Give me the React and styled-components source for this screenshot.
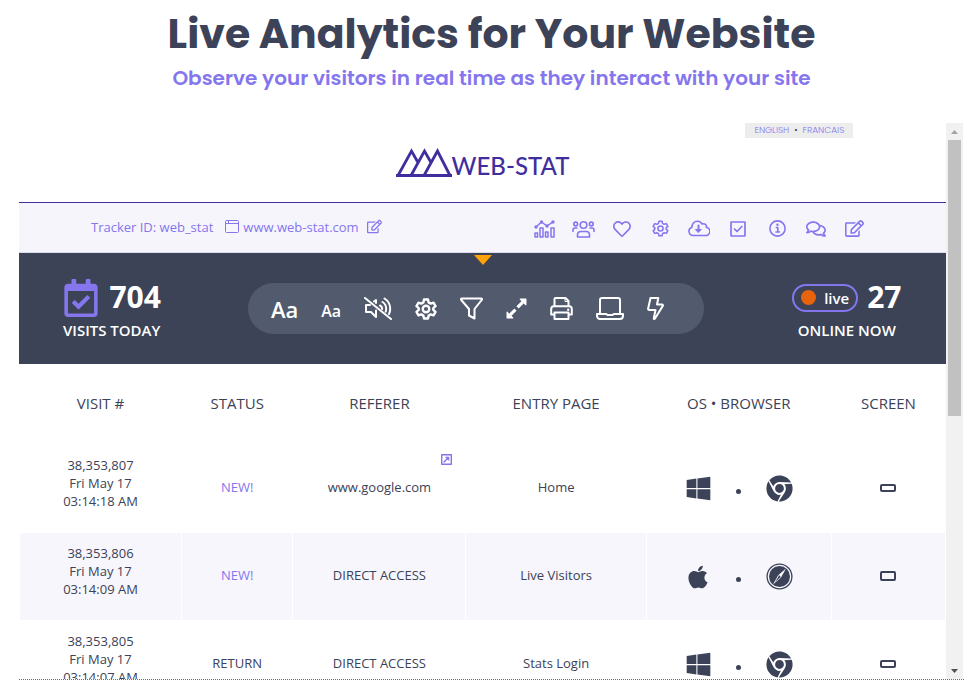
import React from "react";
import styled, { createGlobalStyle } from "styled-components";
import {
    FaApple,
    FaChrome,
    FaRegCalendarCheck,
    FaRegComments,
    FaRegEdit,
    FaRegHeart,
    FaWindows
} from "react-icons/fa";

const INK = "#3c4257";
const VIOLET = "#8576ee";
const LOGO_COLOR = "#402e9e";
const BAR_BG = "#f6f5fc";
const ROW_BG = "#f6f6fc";
const PANEL_BG = "#3c4356";
const PILL_BG = "#525a6e";
const HEADING_FONT = "Poppins, Inter, sans-serif";
const BODY_FONT = "\"Open Sans\", \"Noto Sans\", sans-serif";

const GlobalStyle = createGlobalStyle`
  * {
    box-sizing: border-box;
  }

  body {
    margin: 0;
    background: #fff;
    color: ${INK};
    font-family: ${BODY_FONT};
  }

  a {
    color: ${VIOLET};
    text-decoration: none;
  }

  svg {
    display: block;
  }
`;

const Page = styled.main`
  height: 100vh;
  display: flex;
  flex-direction: column;
  padding: 8px 7px 9px 19px;
`;

const Heading = styled.header`
  height: 115px;
  flex-shrink: 0;
  text-align: center;
  font-family: ${HEADING_FONT};
`;

const Title = styled.h1`
  margin: 0;
  font-size: 41px;
  line-height: 52px;
  font-weight: 700;
  white-space: nowrap;
`;

const Subtitle = styled.h2`
  margin: 4px 0 0;
  font-size: 20px;
  line-height: 28px;
  font-weight: 600;
  color: ${VIOLET};
`;

const Frame = styled.section`
  flex: 1;
  min-height: 0;
  display: flex;
  border-bottom: 1px dotted #6a5cc4;
`;

const FrameContent = styled.div`
  flex: 1;
  min-width: 0;
  overflow: hidden;
`;

const ScrollTrack = styled.div`
  width: 17px;
  margin-right: 1px;
  padding: 0 2px;
  background: #f1f1f1;
  display: flex;
  flex-direction: column;
`;

const ScrollThumb = styled.div`
  height: 49.7%;
  background: #c1c1c1;
`;

const ScrollArrow = styled.div`
  height: 17px;
  display: flex;
  align-items: center;
  justify-content: center;
  margin-top: ${props => props.$atEnd ? "auto" : 0};
`;

const Scrollbar = () => {
    return <ScrollTrack>
        <ScrollArrow>
            <svg width="7" height="4" fill="#a3a3a3"><path d="M3.500 0L7 4H0z"/></svg>
        </ScrollArrow>
        <ScrollThumb/>
        <ScrollArrow $atEnd>
            <svg width="7" height="4" fill="#505050"><path d="M0 0h7L3.500 4z"/></svg>
        </ScrollArrow>
    </ScrollTrack>;
};

const Languages = styled.nav`
  width: fit-content;
  margin-left: auto;
  margin-right: 10%;
  padding: 0 9px;
  background: #ededed;
  font-family: ${HEADING_FONT};
  font-size: 9px;
  line-height: 15px;
  font-weight: 300;
  display: flex;
  gap: 5px;
`;

const Logo = styled.div`
  height: 64px;
  padding-top: 10px;
  display: flex;
  justify-content: center;
`;

const LogoText = styled.span`
  color: ${LOGO_COLOR};
  font-family: Lato, sans-serif;
  font-size: 24px;
  line-height: 36px;
  font-weight: 500;
`;

const TrackerBar = styled.div`
  height: 51px;
  padding: 0 72px;
  border-top: 1px solid ${LOGO_COLOR};
  border-bottom: 1px solid #dcdaf0;
  background: ${BAR_BG};
  color: ${VIOLET};
  display: flex;
  align-items: center;
  justify-content: space-between;
`;

const Tracker = styled.div`
  margin-bottom: 2px;
  display: flex;
  align-items: center;
  gap: 4px;
  font-size: 13px;
  line-height: 18px;
`;

const TrackerId = styled.span`
  margin-right: 8px;
`;

const TrackerSite = styled.a`
  margin-right: 4px;
`;

const NavIcons = styled.nav`
  width: 349px;
  margin-top: 2px;
  display: grid;
  grid-template-columns: repeat(9, 1fr);
  align-items: center;
  justify-items: center;
`;

const IconButton = styled.button`
  padding: 0;
  border: none;
  background: none;
  color: inherit;
  font: inherit;
  cursor: pointer;
`;

const Panel = styled.div`
  position: relative;
  height: 111px;
  padding-top: 23px;
  background: ${PANEL_BG};
  color: #fff;
  display: flex;
  justify-content: space-between;
  align-items: flex-start;
`;

const PanelArrow = styled.svg`
  position: absolute;
  top: 2px;
  left: 50%;
  margin-left: -9px;
`;

const Stat = styled.div`
  width: ${props => props.width};
  display: flex;
  flex-direction: column;
  align-items: center;
`;

const StatTop = styled.div`
  height: 43px;
  display: flex;
  align-items: center;
  gap: 9px;
  font-size: 30px;
  line-height: 40px;
  font-weight: 700;
`;

const StatNumber = styled.span`
  padding-bottom: 2px;
`;

const StatLabel = styled.div`
  font-size: 15px;
  line-height: 22px;
  font-weight: 600;
`;

const LiveBadge = styled.span`
  height: 28px;
  padding: 0 7px;
  border: 2px solid ${VIOLET};
  border-radius: 14px;
  display: flex;
  align-items: center;
  gap: 8px;
  font-size: 15px;
  font-weight: 600;
`;

const LiveDot = styled.span`
  width: 15px;
  height: 15px;
  border-radius: 50%;
  background: #e8640c;
`;

const Pill = styled.div`
  height: 51px;
  margin-top: 7px;
  padding: 0 40px 0 23px;
  border-radius: 26px;
  background: ${PILL_BG};
  display: flex;
  align-items: center;
  gap: 23px;
`;

const TextSizeButton = styled(IconButton)`
  height: 36px;
  font-size: ${props => props.size}px;
  line-height: ${props => props.$lineHeight}px;
  font-weight: 600;
`;

const Visits = styled.table`
  width: 100%;
  table-layout: fixed;
  border-collapse: separate;
  border-spacing: 1px;
  font-size: 13px;
  line-height: 18px;
  text-align: center;
`;

const HeadCell = styled.th`
  width: ${props => props.width};
  height: 79px;
  padding: 0 0 3px;
  font-size: 15px;
  font-weight: 500;
`;

const VisitCell = styled.td`
  position: relative;
  height: 87px;
  padding: 0 0 ${props => props.$raised ? 12 : 4}px;
  background: ${props => props.$shaded ? ROW_BG : "#fff"};
  color: ${props => props.$accent ? VIOLET : INK};
  font-weight: 500;
`;

const ExternalLink = styled.a`
  position: absolute;
  top: 9px;
  right: 13px;
`;

const Systems = styled.div`
  margin-top: 4px;
  display: flex;
  align-items: center;
  justify-content: center;
  gap: 24px;
`;

const SystemSlot = styled.span`
  width: 28px;
  display: flex;
  justify-content: center;
`;

const Dot = styled.span`
  width: 5px;
  height: 5px;
  margin-top: 5px;
  border-radius: 50%;
  background: ${INK};
`;

const ScreenShape = styled.span`
  display: inline-block;
  width: 16px;
  height: ${props => props.$tall ? 10 : 8}px;
  border: 2px solid ${INK};
  border-radius: 2px;
  vertical-align: middle;
`;

const LineIcon = ({ width, height, box, stroke = 2, children }) => {
    return <svg width={width} height={height} viewBox={box ?? `0 0 ${width} ${height}`} fill="none"
        stroke="currentColor" strokeWidth={stroke} strokeLinejoin="round" strokeLinecap="round">
        {children}
    </svg>;
};

const ChartIcon = () => <LineIcon width={21} height={18} stroke={1.5}>
    <path d="M2 7L7.500 2L13 6L19 1.800"/>
    <g fill="currentColor" stroke="none">
        <circle cx="2" cy="7" r="1.700"/>
        <circle cx="7.500" cy="2" r="1.700"/>
        <circle cx="13" cy="6" r="1.700"/>
        <circle cx="19" cy="2" r="1.700"/>
    </g>
    <path d="M1 13h2.500v4H1zM6 8h3v9H6zM11.500 12h2.500v5h-2.500zM17 8h3v9h-3z"/>
</LineIcon>;

const UsersIcon = () => <LineIcon width={23} height={18} stroke={1.6}>
    <circle cx="11.500" cy="5" r="3.300"/>
    <circle cx="3.700" cy="4" r="1.900"/>
    <circle cx="19.300" cy="4" r="1.900"/>
    <path d="M5.500 17v-2.200c0-2.300 1.700-3.300 3.500-3.300h5c1.800 0 3.500 1 3.500 3.300V17zM1 11.500V10c0-1.200 1-2 2-2h2M22 11.500V10c0-1.200-1-2-2-2h-2"/>
</LineIcon>;

const GearIcon = ({ size, stroke }) => <LineIcon width={size} height={size} box="0 0 22 22" stroke={stroke}>
    <path d="M9 1.500h4l.6 2.900 2.100 1.200 2.800-.9 2 3.500-2.200 1.900v1.800l2.200 1.900-2 3.500-2.800-.9-2.100 1.200-.6 2.900H9l-.6-2.900-2.100-1.200-2.800.9-2-3.500 2.200-1.900v-1.800L1.500 8.200l2-3.500 2.800.9 2.100-1.200z"/>
    <circle cx="11" cy="11" r="3.300"/>
</LineIcon>;

const CloudIcon = () => <LineIcon width={22} height={17} stroke={1.6}>
    <path d="M5.200 15.500a4.200 4.200 0 0 1-1.300-8.200C3.900 3.800 6.200 1.200 9.300 1.200c2.100 0 3.900 1.100 4.900 2.800 2.400-1 4.700.8 4.200 3.400A4.100 4.100 0 0 1 17 15.500z"/>
    <path d="M10.500 5.500v5" strokeWidth="2"/>
    <path d="M7.800 9.500h5.400l-2.700 2.800z" fill="currentColor" strokeWidth="1"/>
</LineIcon>;

const CheckIcon = () => <LineIcon width={16} height={16} stroke={1.7}>
    <rect x="1" y="1" width="14" height="14" rx="0.500"/>
    <path d="M4.500 8l2.500 2.500L11.800 5.500"/>
</LineIcon>;

const InfoIcon = () => <LineIcon width={17} height={17} stroke={1.6}>
    <circle cx="8.500" cy="8.500" r="7.600"/>
    <path d="M7.500 7.500h1.300v4.300M7.200 12h3" strokeLinecap="square"/>
    <circle cx="8.500" cy="4.700" r="1.200" fill="currentColor" stroke="none"/>
</LineIcon>;

const WindowIcon = () => <LineIcon width={14} height={13} stroke={1}>
    <rect x="0.500" y="0.500" width="13" height="12" rx="1"/>
    <path d="M1 3.500h12M3.500 1v2"/>
</LineIcon>;

const MuteIcon = () => <LineIcon width={28} height={23}>
    <path d="M2 8v7h5l5 5V13.500M3 8h3M10 4.500L12 3v3M16 8.500c1.500.8 2.200 2 2.200 3.500M18.500 5c2.400 1.500 3.700 3.900 3.700 6.700 0 1-.2 2-.5 2.900M20.500 1.500c3.700 2.300 5.700 6.100 5.700 10.200 0 2-.4 3.800-1.200 5.300M1 1l26 21"/>
</LineIcon>;

const FilterIcon = () => <LineIcon width={23} height={23}>
    <path d="M2 1.500h19c1 0 1.300.8.700 1.500L14.500 12v9.500L9 18.500V12L1.300 3C.7 2.300 1 1.500 2 1.500z"/>
</LineIcon>;

const ExpandIcon = () => <LineIcon width={21} height={21} box="0 0 20 20">
    <path d="M4 16l5-5M11 9L16 4" strokeWidth="3" strokeLinecap="butt"/>
    <path d="M13.500 1H19v5.500zM1 13.500V19h5.500z" fill="currentColor" strokeWidth="1"/>
</LineIcon>;

const PrinterIcon = () => <LineIcon width={23} height={23}>
    <path d="M4.500 9V2c0-.6.4-1 1-1h10l3 3v5"/>
    <path d="M15 1v3.500h3.500" strokeWidth="1"/>
    <path d="M4 17.500H1.200V12c0-1.700 1-2.800 2.600-2.800h15.400c1.600 0 2.600 1.100 2.600 2.800v5.500H19M4.500 15.500h14V22h-14z"/>
    <circle cx="18.200" cy="12.700" r="1.200" fill="currentColor" stroke="none"/>
</LineIcon>;

const LaptopIcon = () => <LineIcon width={28} height={23}>
    <path d="M4 16V3c0-1.200.8-2 2-2h16c1.200 0 2 .8 2 2v13M1 17h9.500l.7 1h5.600l.7-1H27v1.500c0 2-1.200 3.500-3 3.500H4c-1.800 0-3-1.500-3-3.500z"/>
</LineIcon>;

const BoltIcon = () => <LineIcon width={17} height={23}>
    <path d="M3.500 1h7.800L10 7.500h5c.8 0 1.200.7.800 1.400L8 21.500c-.5.8-1.400.5-1.200-.4L8.500 13H2.200c-.7 0-1.200-.5-1.100-1.200z"/>
</LineIcon>;

const OpenIcon = () => <LineIcon width={11} height={11} stroke={1.4}>
    <rect x="0.700" y="0.700" width="9.600" height="9.600"/>
    <path d="M3 8l4-4"/>
    <path d="M5 3.200h2.800V6z" fill="currentColor" strokeWidth="1"/>
</LineIcon>;

const CompassIcon = () => <svg width="27" height="27" viewBox="0 0 27 27">
    <circle cx="13.500" cy="13.500" r="12.400" fill="none" stroke={INK} strokeWidth="1.300"/>
    <circle cx="13.500" cy="13.500" r="10.500" fill={INK}/>
    <path d="M20 5.500l-5.200 9.200-2.600-2.400z" fill="#fff"/>
    <path d="M7 21.500l5.200-9.200 2.600 2.400z" fill="#fff"/>
    <path d="M8.800 19.200l4-6 1.400 1.300z" fill={INK}/>
    <circle cx="13.500" cy="13.500" r="0.900" fill={INK}/>
</svg>;

const NAV = [
    ["Statistics", <ChartIcon/>],
    ["Visitors", <UsersIcon/>],
    ["Favorites", <FaRegHeart size={18}/>],
    ["Settings", <GearIcon size={17} stroke={2}/>],
    ["Download", <CloudIcon/>],
    ["Tasks", <CheckIcon/>],
    ["Information", <InfoIcon/>],
    ["Chat", <FaRegComments size={20}/>],
    ["Edit", <FaRegEdit size={19}/>],
];

const TOOLS = [
    ["Mute", <MuteIcon/>],
    ["Options", <GearIcon size={22} stroke={2.4}/>],
    ["Filter", <FilterIcon/>],
    ["Expand", <ExpandIcon/>],
    ["Print", <PrinterIcon/>],
    ["Display", <LaptopIcon/>],
    ["Refresh", <BoltIcon/>],
];

const COLUMNS = [
    ["VISIT #", "17.5%"],
    ["STATUS", "12%"],
    ["REFERER", "18.7%"],
    ["ENTRY PAGE", "19.5%"],
    ["OS • BROWSER", "20%"],
    ["SCREEN", "auto"],
];

const VISITS = [
    { id: "38,353,807", time: "03:14:18 AM", status: "NEW!", referer: "www.google.com", external: true, page: "Home", mac: false },
    { id: "38,353,806", time: "03:14:09 AM", status: "NEW!", referer: "DIRECT ACCESS", page: "Live Visitors", mac: true },
    { id: "38,353,805", time: "03:14:07 AM", status: "RETURN", referer: "DIRECT ACCESS", page: "Stats Login", mac: false },
];

const VisitRow = ({ visit, shaded }) => {
    return <tr>
        <VisitCell $shaded={shaded} $raised>
            {visit.id}<br/>Fri May 17<br/>{visit.time}
        </VisitCell>
        <VisitCell $shaded={shaded} $accent={visit.status === "NEW!"}>{visit.status}</VisitCell>
        <VisitCell $shaded={shaded}>
            {visit.referer}
            {visit.external && <ExternalLink href="#referer" aria-label="Open referer"><OpenIcon/></ExternalLink>}
        </VisitCell>
        <VisitCell $shaded={shaded}>{visit.page}</VisitCell>
        <VisitCell $shaded={shaded}>
            <Systems>
                <SystemSlot>{visit.mac ? <FaApple size={26}/> : <FaWindows size={27}/>}</SystemSlot>
                <Dot/>
                <SystemSlot>{visit.mac ? <CompassIcon/> : <FaChrome size={27}/>}</SystemSlot>
            </Systems>
        </VisitCell>
        <VisitCell $shaded={shaded}><ScreenShape $tall={visit.mac}/></VisitCell>
    </tr>;
};

const App = () => {
    return <Page>
        <GlobalStyle/>
        <Heading>
            <Title>Live Analytics for Your Website</Title>
            <Subtitle>Observe your visitors in real time as they interact with your site</Subtitle>
        </Heading>
        <Frame>
            <FrameContent>
                <Languages><a href="#en">ENGLISH</a><span>•</span><a href="#fr">FRANCAIS</a></Languages>
                <Logo>
                    <svg width="56" height="29" fill="none" stroke={LOGO_COLOR} strokeWidth="2.800">
                        <path d="M2 27.500L15.500 3L22 14.500M15 27.500L28.500 3L35 14.500M28 27.500L41.500 3L54 27.500"/>
                        <path d="M0 27.500h56"/>
                    </svg>
                    <LogoText>WEB-STAT</LogoText>
                </Logo>
                <TrackerBar>
                    <Tracker>
                        <TrackerId>Tracker ID: web_stat</TrackerId>
                        <WindowIcon/>
                        <TrackerSite href="#site">www.web-stat.com</TrackerSite>
                        <IconButton aria-label="Edit site"><FaRegEdit size={15}/></IconButton>
                    </Tracker>
                    <NavIcons>
                        {NAV.map(([name, icon]) => <IconButton key={name} aria-label={name}>{icon}</IconButton>)}
                    </NavIcons>
                </TrackerBar>
                <Panel>
                    <PanelArrow width="18" height="10" fill="#ffa30a"><path d="M0 0h18L9 10z"/></PanelArrow>
                    <Stat width="20%">
                        <StatTop><FaRegCalendarCheck size={38} color={VIOLET}/><StatNumber>704</StatNumber></StatTop>
                        <StatLabel>VISITS TODAY</StatLabel>
                    </Stat>
                    <Pill>
                        <TextSizeButton size={22} $lineHeight={34}>Aa</TextSizeButton>
                        <TextSizeButton size={16} $lineHeight={40}>Aa</TextSizeButton>
                        {TOOLS.map(([name, icon]) => <IconButton key={name} aria-label={name}>{icon}</IconButton>)}
                    </Pill>
                    <Stat width="21.4%">
                        <StatTop><LiveBadge><LiveDot/>live</LiveBadge><StatNumber>27</StatNumber></StatTop>
                        <StatLabel>ONLINE NOW</StatLabel>
                    </Stat>
                </Panel>
                <Visits>
                    <thead>
                        <tr>{COLUMNS.map(([name, width]) => <HeadCell key={name} width={width}>{name}</HeadCell>)}</tr>
                    </thead>
                    <tbody>
                        {VISITS.map((visit, i) => <VisitRow key={visit.id} visit={visit} shaded={i % 2 === 1}/>)}
                    </tbody>
                </Visits>
            </FrameContent>
            <Scrollbar/>
        </Frame>
    </Page>;
};

export default App;
